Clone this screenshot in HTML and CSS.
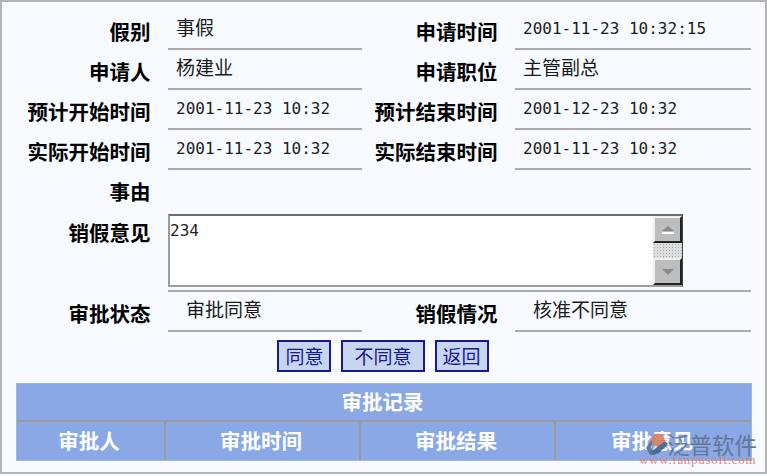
FILE: index.html
```html
<!DOCTYPE html>
<html lang="zh-CN">
<head>
<meta charset="utf-8">
<title>销假审批</title>
<link rel="stylesheet" href="styles.css">
</head>
<body>
<main class="frame">
  <div class="row">
    <div class="label">假别</div><div class="value">事假</div>
    <div class="label">申请时间</div><div class="value mono">2001-11-23 10:32:15</div>
  </div>
  <div class="row">
    <div class="label">申请人</div><div class="value">杨建业</div>
    <div class="label">申请职位</div><div class="value">主管副总</div>
  </div>
  <div class="row">
    <div class="label">预计开始时间</div><div class="value mono">2001-11-23 10:32</div>
    <div class="label">预计结束时间</div><div class="value mono">2001-12-23 10:32</div>
  </div>
  <div class="row">
    <div class="label">实际开始时间</div><div class="value mono">2001-11-23 10:32</div>
    <div class="label">实际结束时间</div><div class="value mono">2001-11-23 10:32</div>
  </div>
  <div class="row row-plain">
    <div class="label">事由</div>
  </div>
  <div class="row-memo">
    <div class="label label-memo">销假意见</div>
    <div class="memo-cell">
      <div class="memo">
        <div class="memo-text">234</div>
        <div class="scrollbar">
          <div class="sb-btn"><svg width="14" height="8" viewBox="0 0 14 8"><path class="sb-arrow" d="M7 0 L13 5 H1 Z"/><path class="sb-hi" d="M1 7 H13" /></svg></div>
          <div class="sb-track"></div>
          <div class="sb-btn"><svg width="14" height="8" viewBox="0 0 14 8"><path class="sb-arrow" d="M1 1 H13 L7 7 Z"/></svg></div>
        </div>
      </div>
    </div>
  </div>
  <div class="row">
    <div class="label label-low">审批状态</div><div class="value indent">审批同意</div>
    <div class="label label-low">销假情况</div><div class="value indent">核准不同意</div>
  </div>
  <div class="actions">
    <button class="btn" type="button">同意</button>
    <button class="btn btn-wide" type="button">不同意</button>
    <button class="btn" type="button">返回</button>
  </div>
  <section class="records">
    <div class="records-title">审批记录</div>
    <div class="records-head">
      <div class="th">审批人</div>
      <div class="th">审批时间</div>
      <div class="th">审批结果</div>
      <div class="th">审批意见</div>
    </div>
  </section>
  <div class="watermark">
    <div class="wm-top">
      <svg class="wm-logo" width="22" height="23" viewBox="0 0 22 23">
        <path d="M0 15 L8 3 L11 1 L5 14 L9 22 L4 22 Z" fill="#5b7391"/>
        <circle cx="12" cy="7" r="6.5" fill="#d9805c"/>
        <path d="M6 18 L19 8 L22 11 L13 20 L7 22 Z" fill="#47648a"/>
      </svg>
      <span class="wm-name">泛普软件</span>
    </div>
    <div class="wm-url">www.fanpusoft.com</div>
  </div>
</main>
</body>
</html>
```
FILE: styles.css
```css
* { box-sizing: border-box; }
html, body { margin: 0; padding: 0; background: #fbfcff; }
body { width: 767px; height: 476px; overflow: hidden; }

.frame {
  position: relative;
  width: 767px;
  height: 474px;
  border: 2px solid #b4b4b4;
  background: #f7faff;
  padding: 7px 15px 0 14px;
  font-family: "Noto Sans CJK SC", "Noto Sans", sans-serif;
  color: #1a1a1a;
}

.row {
  display: grid;
  grid-template-columns: 152px 194px 153px 236px;
  height: 40px;
}
.row-plain .label { padding-top: 3px; }

.label {
  padding: 3px 17.5px 0 0;
  text-align: right;
  font-size: 20.5px;
  line-height: 38px;
  font-weight: 700;
  color: #000;
  white-space: nowrap;
}
.label-low { padding-top: 2px; }

.value {
  border-bottom: 2px solid #ababab;
  padding: 0 0 0 8px;
  font-size: 19px;
  line-height: 36px;
  white-space: pre;
}
.indent { padding-left: 18px; line-height: 33px; }
.mono {
  font-family: "DejaVu Sans Mono", "Liberation Mono", monospace;
  font-size: 16px;
  padding-left: 8px;
  line-height: 39px;
}

.row-memo {
  display: grid;
  grid-template-columns: 152px 583px;
  height: 83px;
}
.label-memo { padding-top: 0; line-height: 46px; }
.memo-cell {
  border-bottom: 2px solid #ababab;
  padding-top: 5px;
}
.memo {
  display: flex;
  justify-content: space-between;
  width: 515px;
  height: 73px;
  background: #fff;
  border: 2px solid #9c9c9c;
  border-top-color: #6e6e6e;
  border-right: 1px solid #444;
}
.memo-text {
  padding: 6px 0 0 0;
  font-family: "DejaVu Sans Mono", "Liberation Mono", monospace;
  font-size: 16px;
  line-height: 18px;
  color: #222;
}
.scrollbar {
  display: flex;
  flex-direction: column;
  width: 29px;
}
.sb-btn {
  display: flex;
  align-items: center;
  justify-content: center;
  height: 27px;
  background: #bdbdbd;
  border: 2px solid;
  border-color: #efefef #222 #222 #efefef;
}
.sb-track {
  flex: 1;
  background-color: #ddd;
  background-image: radial-gradient(#aaa 40%, transparent 45%);
  background-size: 3px 3px;
}
.sb-arrow { fill: #8a8a8a; }
.sb-hi { stroke: #fff; stroke-width: 2; fill: none; }

.actions {
  display: flex;
  justify-content: center;
  gap: 10px;
  padding: 8px 0 0 0;
  height: 51px;
}
.btn {
  height: 32px;
  padding: 0 6px;
  border: 2px solid #1a1a8e;
  background: #c6d6ef;
  color: #1a1a8e;
  font-family: "Noto Sans CJK SC", sans-serif;
  font-size: 19px;
  line-height: 26px;
}
.btn-wide { padding: 0 11px; }

.records {
  width: 736px;
  height: 78px;
  background: #8aa8e6;
  border: 1px solid #a4b6dd;
  color: #fff;
  font-weight: 700;
  font-size: 20.5px;
  text-align: center;
}
.records-title {
  height: 38px;
  padding-right: 3px;
  line-height: 34px;
  border-bottom: 2px solid #9a9a9a;
}
.records-head {
  display: grid;
  grid-template-columns: 149px 195px 195px 195px;
  height: 38px;
}
.th {
  padding-right: 3px;
  line-height: 36px;
  border-right: 2px solid #9a9a9a;
}
.th:last-child { border-right: 0; }

.watermark {
  position: absolute;
  left: 637px;
  top: 429px;
  width: 122px;
  opacity: .92;
  pointer-events: none;
}
.wm-top {
  display: flex;
  align-items: center;
  height: 26px;
}
.wm-logo { flex: none; margin-left: 7px; }
.wm-name {
  margin-left: -1px;
  font-size: 22.5px;
  line-height: 26px;
  color: #5f7590;
  white-space: nowrap;
}
.wm-url {
  margin-top: -3px;
  font-family: "Liberation Serif", serif;
  font-size: 13px;
  line-height: 12px;
  letter-spacing: .7px;
  color: #e0826a;
  white-space: nowrap;
}
```
